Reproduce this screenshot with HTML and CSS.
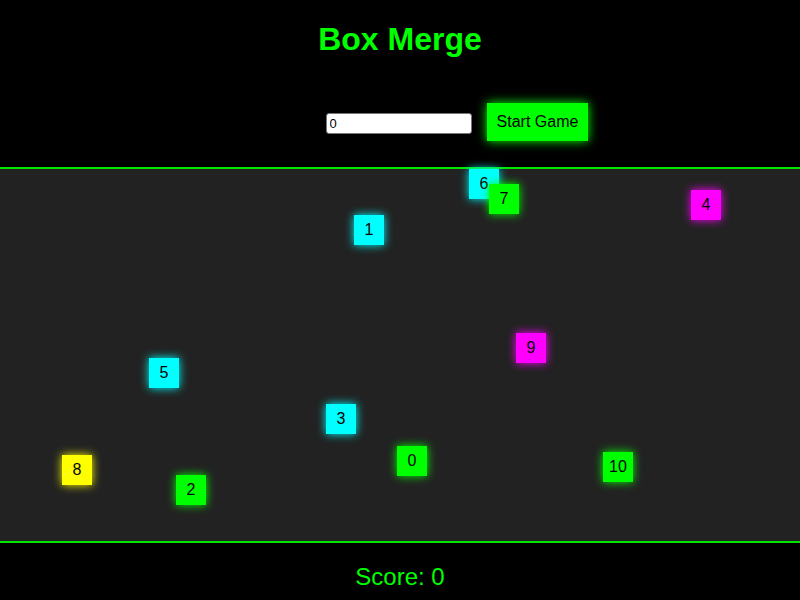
FILE: index.html
```html
<!DOCTYPE html>
<html>
<head>
<meta charset="utf-8">
<title>Box Merge</title>
<link rel="stylesheet" href="styles.css">
</head>
<body>
<header class="header">
  <h1 class="title">Box Merge</h1>
  <div class="controls">
    <input class="count-input" type="text" value="0">
    <button class="start-btn">Start Game</button>
  </div>
</header>
<main class="game">
  <div class="box cyan" style="left:469px;top:0px">6</div>
  <div class="box green" style="left:489px;top:15px">7</div>
  <div class="box magenta" style="left:691px;top:21px">4</div>
  <div class="box cyan" style="left:354px;top:46px">1</div>
  <div class="box magenta" style="left:516px;top:164px">9</div>
  <div class="box cyan" style="left:149px;top:189px">5</div>
  <div class="box cyan" style="left:326px;top:235px">3</div>
  <div class="box green" style="left:397px;top:277px">0</div>
  <div class="box green" style="left:603px;top:283px">10</div>
  <div class="box yellow" style="left:62px;top:286px">8</div>
  <div class="box green" style="left:176px;top:306px">2</div>
</main>
<footer class="footer">Score: 0</footer>
</body>
</html>
```
FILE: styles.css
```css
html, body {
  margin: 0;
  padding: 0;
  background: #000;
  font-family: "Liberation Sans", Arial, sans-serif;
  height: 600px;
  overflow: hidden;
}
.header {
  height: 167px;
  box-sizing: border-box;
  padding-top: 21px;
}
.title {
  margin: 0;
  font-size: 32px;
  line-height: 37px;
  font-weight: bold;
  color: #00ff00;
  text-align: center;
}
.controls {
  display: flex;
  justify-content: center;
  align-items: center;
  gap: 15px;
  margin-top: 45px;
  padding-left: 114px;
}
.count-input {
  width: 146px;
  height: 21px;
  box-sizing: border-box;
  border: 1px solid #767676;
  border-radius: 3px;
  padding: 1px 3px;
  font-family: "Liberation Sans", Arial, sans-serif;
  font-size: 13px;
  background: #fff;
  color: #000;
  margin-top: 3px;
}
.start-btn {
  background: #00ff00;
  border: none;
  color: #000;
  font-family: "Liberation Sans", Arial, sans-serif;
  font-size: 16px;
  line-height: 18px;
  padding: 10px 10px;
  box-shadow: 0 0 10px #00ff00;
}
.game {
  position: relative;
  height: 372px;
  background: #222;
  border-top: 2px solid #00e600;
  border-bottom: 2px solid #00e600;
}
.box {
  position: absolute;
  width: 30px;
  height: 30px;
  display: flex;
  align-items: center;
  justify-content: center;
  font-size: 16px;
  color: #000;
}
.cyan { background: #00ffff; box-shadow: 0 0 10px #00ffff; }
.green { background: #00ff00; box-shadow: 0 0 10px #00ff00; }
.magenta { background: #ff00ff; box-shadow: 0 0 10px #ff00ff; }
.yellow { background: #ffff00; box-shadow: 0 0 10px #ffff00; }
.footer {
  text-align: center;
  color: #00ff00;
  font-size: 24px;
  line-height: 28px;
  padding-top: 20px;
}
```
